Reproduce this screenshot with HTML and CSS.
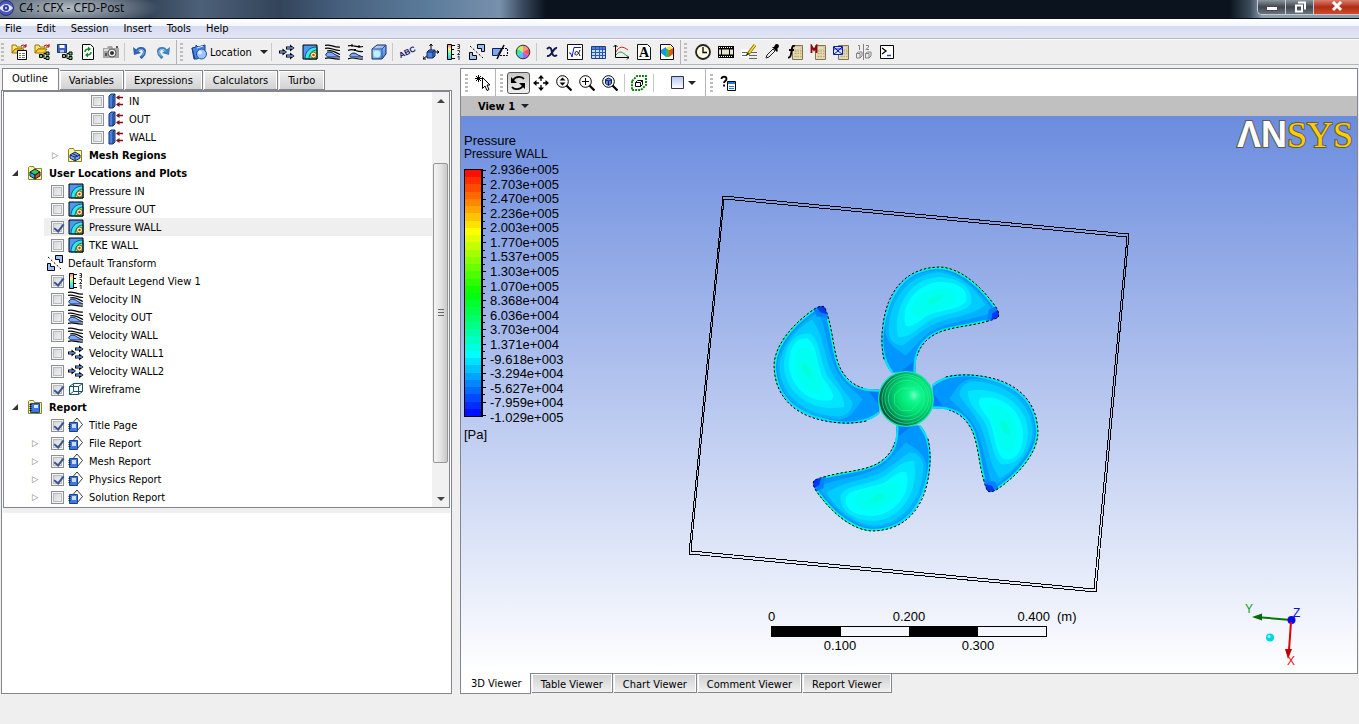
FILE: index.html
```html
<!DOCTYPE html>
<html lang="en">
<head>
    <meta charset="UTF-8">
    <meta name="viewport" content="width=device-width, initial-scale=1.0">
    <title>C4 : CFX - CFD-Post</title>
    <link rel="stylesheet" href="styles.css">
</head>
<body>
    <!-- icon set -->
    <svg class="defs" width="0" height="0" aria-hidden="true">
        <defs>
            <linearGradient id="rainbow" x1="0" y1="0" x2="0" y2="1">
                <stop offset="0" stop-color="#ff60c0"/><stop offset=".3" stop-color="#ffff80"/><stop offset=".6" stop-color="#60ffb0"/><stop offset="1" stop-color="#50b0ff"/>
            </linearGradient>
            <linearGradient id="blueFill" x1="0" y1="0" x2="1" y2="1">
                <stop offset="0" stop-color="#d8e8ff"/><stop offset="1" stop-color="#3c78e0"/>
            </linearGradient>
            <linearGradient id="pale" x1="0" y1="0" x2="0" y2="1">
                <stop offset="0" stop-color="#b4c6f4"/><stop offset="1" stop-color="#fff"/>
            </linearGradient>
        </defs>
        <symbol id="i-folder" viewBox="0 0 16 16"><path d="M1 9V1h4l1 2h5v2H4z" fill="#ffe870" stroke="#9a7400"/><path d="M1 9l3-4h9l-3 4z" fill="#ffd040" stroke="#9a7400"/><path d="M10 2q2-2 5 0M15 0v3h-3" fill="none" stroke="#b00000"/></symbol>
        <symbol id="i-net" viewBox="0 0 16 16"><path d="M6 12h4M10 9.500v5M10 9.500h2M10 14.500h2" fill="none" stroke="#000"/><path d="M5.500 10.500h3v3h-3zM12 8h3v3h-3zM12 12.500h3v3h-3z" fill="#5ad060" stroke="#000"/></symbol>
        <symbol id="i-load" viewBox="0 0 16 16"><use href="#i-folder"/><path d="M6.500 6.500h9v9h-9z" fill="#fff" stroke="#000"/><path d="M8 9.500h2m1 0h3M8 11.500h2m1 0h3M8 13.500h2m1 0h3" stroke="#777"/></symbol>
        <symbol id="i-state" viewBox="0 0 16 16"><use href="#i-folder"/><use href="#i-net"/></symbol>
        <symbol id="i-save" viewBox="0 0 16 16"><path d="M.500.500h9v8h-9z" fill="#3a62b8" stroke="#1c3570"/><path d="M2.500 1h5v3h-5z" fill="#fff"/><path d="M3 6h4v2.500H3z" fill="#b8c4e0"/><use href="#i-net"/></symbol>
        <symbol id="i-refresh" viewBox="0 0 16 16"><path d="M2.500.500h8l3 3v12h-11z" fill="#fff" stroke="#000"/><path d="M5 8c0-3 2-3 4-3M11 8c0 3-2 3-4 3" fill="none" stroke="#158a28" stroke-width="1.500"/><path d="M8 2.500L11 5 8 7.500zM8 8.500L5 11l3 2.500z" fill="#158a28"/></symbol>
        <symbol id="i-camera" viewBox="0 0 16 16"><path d="M0 4h4l1-2h4l1 2h6v10H0z" fill="#a4a4a4"/><path d="M1 5h9v2H1z" fill="#dcdcdc"/><circle cx="9" cy="9" r="4" fill="#eee" stroke="#555"/><circle cx="9" cy="9" r="2" fill="#333"/><path d="M13 2h2v2h-2zM2 9h2v3H2z" fill="#555"/></symbol>
        <symbol id="i-undo" viewBox="0 0 16 16"><path d="M5 7c2-4 8-3 7.500 1 0 3-2 4-4 6" fill="none" stroke="#2c62b4" stroke-width="3"/><path d="M1 3l1 8 7-2z" fill="#2c62b4"/><path d="M5 7.500c2-3 7-3 7 .500 0 2-1 3-2.500 4" fill="none" stroke="#8dbcf0"/></symbol>
        <symbol id="i-redo" viewBox="0 0 16 16"><path d="M11 7C9 3 3 4 3.500 8c0 3 2 4 4 6" fill="none" stroke="#3c80bc" stroke-width="3"/><path d="M15 3l-1 8-7-2z" fill="#3c80bc"/><path d="M11 7.500C9 4.500 4 4.500 4 8c0 2 1 3 2.500 4" fill="none" stroke="#a4d4f4"/></symbol>
        <symbol id="i-location" viewBox="0 0 16 16"><path d="M1 4l4-1V1l2 2 7-2v9l-8 5H3z" fill="#4c86e4" stroke="#123c88"/><path d="M1 4l3 11" stroke="#123c88"/><path d="M6 4l6-2" stroke="#d8e8ff"/><circle cx="10.500" cy="10" r="5" fill="#9cc4fa" stroke="#1c50a8"/><circle cx="9" cy="8.500" r="2" fill="#d8eaff"/></symbol>
        <symbol id="i-vector" viewBox="0 0 16 16"><path d="M7 2.500h4V.500L15.500 4 11 7.500v-2H7zM0 6.500h3.500v-2L8 8l-4.500 3.500v-2H0zM7 10.500h4v-2l4.500 3.500-4.500 3.500v-2H7z" fill="#000"/><path d="M8 4h6M1 8h5.500M8 12h6" stroke="#6c9cf0" stroke-width="1.500"/></symbol>
        <symbol id="i-contour" viewBox="0 0 16 16"><path d="M1 1h14v14H1z" fill="#4c98f4"/><path d="M15 3C7 3 3 8 3 15h12z" fill="#30e8f0" stroke="#163c5c" stroke-width=".800"/><path d="M15 6c-5 0-8 4-8 9h8z" fill="#70e8a0" stroke="#164c3c" stroke-width=".800"/><circle cx="11.500" cy="11" r="3" fill="#fffaa8" stroke="#5c4400" stroke-width=".800"/><circle cx="11.500" cy="11" r="1.200" fill="#e02020"/><path d="M1 1h14v14H1z" fill="none" stroke="#000"/></symbol>
        <symbol id="i-stream" viewBox="0 0 16 16"><path d="M0 1.500c5-2 8 2 15 1.500M0 4.500c5-2 8 2 15 2M2 7c5-2 9 2 13 3.500M0 14.500c5-2 8 1 15 .500" fill="none" stroke="#000" stroke-width="1.200"/><path d="M1 10c2-3 6-2 8 0l6 3H5c-2 0-5-1-4-3z" fill="#7caaff" stroke="#102860"/></symbol>
        <symbol id="i-particle" viewBox="0 0 16 16"><path d="M0 2c5-2 8 2 15 .500M0 6.500c6-3 8 2 15 1M0 15c6-3 9 1 15 0" fill="none" stroke="#000" stroke-width="1.200"/><path d="M3 .500h2v2H3zM10 1.500h2v2h-2zM6 5h2v2H6z"/><path d="M2 11c2-3 6-2 8 0l5 2H5c-2 0-4 0-3-2z" fill="#7caaff" stroke="#102860"/></symbol>
        <symbol id="i-volume" viewBox="0 0 16 16"><path d="M1 5l5-4h9v9l-4 5H1z" fill="url(#blueFill)" stroke="#102c60"/><path d="M1 5h10v10M11 5l4-4" fill="none" stroke="#2454a0"/><circle cx="6" cy="10" r="3.500" fill="#b8f4fa"/></symbol>
        <symbol id="i-axes" viewBox="0 0 16 16"><path d="M8 8V0M8 8h8M5 11l-5 4M6.500 2L8 0l1.500 2M14 6.500L16 8l-2 1.500M0 12v3h3" fill="none" stroke="#000"/><path d="M4 8l2-2h6v6l-2 2H4z" fill="#4c80e8" stroke="#102860"/><path d="M4 8h6v6M10 8l2-2" fill="none" stroke="#102860"/></symbol>
        <symbol id="i-legend" viewBox="0 0 16 16"><path d="M1.500.500h4v15h-4z" fill="url(#rainbow)" stroke="#000"/><path d="M6 1.500h3M6 5.500h2M6 10.500h2M6 14.500h3" stroke="#000"/><path d="M11.500 .500h2v4h-2m0-2h2M11.500 6.500h2v2l-2 2h2.500M11.500 13l1.500-1v4" fill="none" stroke="#333"/></symbol>
        <symbol id="i-transform" viewBox="0 0 16 16"><path d="M8.500.500h7v7h-3v-3h-4zM.500 8.500h3v3h4v4h-7z" fill="#9cc0fc" stroke="#000"/><path d="M1 2l13 12" stroke="#000" stroke-dasharray="2 2"/></symbol>
        <symbol id="i-clip" viewBox="0 0 16 16"><path d="M.500 4.500h9l-4 7h-5z" fill="#7ca8f8" stroke="#102050"/><path d="M10 4.500h5.500v7H7" fill="none" stroke="#000" stroke-dasharray="2 1"/><path d="M12 1L5 15" stroke="#000" stroke-width="1.500"/></symbol>
        <symbol id="i-wheel" viewBox="0 0 16 16"><path d="M8 8V1a7 7 0 0 1 6 3.500z" fill="#ff9090"/><path d="M8 8l6-3.500a7 7 0 0 1 0 7z" fill="#ff5050"/><path d="M8 8l6 3.500A7 7 0 0 1 8 15z" fill="#b060f0"/><path d="M8 8v7a7 7 0 0 1-6-3.500z" fill="#50c0ff"/><path d="M8 8l-6 3.500a7 7 0 0 1 0-7z" fill="#40e0a0"/><path d="M8 8L2 4.500A7 7 0 0 1 8 1z" fill="#c0f060"/><circle cx="8" cy="8" r="6.800" fill="none" stroke="#333"/></symbol>
        <symbol id="i-x" viewBox="0 0 16 16"><path d="M3 5c2-2 4-2 4.500 1l1 4c1 3 3 2 4.500 1M13 4c-4-1-5 9-10 8" fill="none" stroke="#10184c" stroke-width="2"/></symbol>
        <symbol id="i-expr" viewBox="0 0 16 16"><path d="M.500.500h15v15H.500z" fill="#fff" stroke="#111"/><path d="M2 9l1.500 0 1.500 4L7 3.500h7" fill="none" stroke="#1020c0"/><path d="M13 6c-2 6-5 6-5 3.500S11 6 13 12" fill="none" stroke="#000"/></symbol>
        <symbol id="i-table" viewBox="0 0 16 16"><path d="M1.500 2.500h14v12h-14z" fill="#c8dcff" stroke="#1c3c80"/><path d="M2 3h13v2H2z" fill="#4c80d8"/><path d="M5.500 3v11M9.500 3v11M12.500 3v11M2 5.500h13M2 8.500h13M2 11.500h13" stroke="#2c58b0"/></symbol>
        <symbol id="i-chart" viewBox="0 0 16 16"><path d="M2.500 1v12.500H16M.500 3l2-2 2 2M14 11.500l2 2-2 2" fill="none" stroke="#000"/><path d="M3 8c3-6 7-6 12-2" fill="none" stroke="#d02020"/><path d="M3 11c4-5 6-3 11 1" fill="none" stroke="#20a030"/></symbol>
        <symbol id="i-figure" viewBox="0 0 16 16"><path d="M1.500.500h10l3 3v12h-13z" fill="#fff" stroke="#111"/><path d="M2 6l5-3v10l-5-4z" fill="#2090f0"/><path d="M7 4l3 2v7H7z" fill="#30c040"/><path d="M10 6l4-2v6l-4 3z" fill="#f05020"/><path d="M7 4l3-2 4 2-4 2z" fill="#ffe040"/></symbol>
        <symbol id="i-clock" viewBox="0 0 16 16"><circle cx="8" cy="8" r="7" fill="#fffce0" stroke="#222" stroke-width="1.800"/><path d="M8 3v5.500h4" fill="none" stroke="#000" stroke-width="1.300"/></symbol>
        <symbol id="i-film" viewBox="0 0 16 16"><path d="M0 2h16v12H0z"/><path d="M1 3.500h14M1 12.500h14" stroke="#fff" stroke-dasharray="1 1"/><path d="M1 5.500h2v5H1zM4 5.500h7v5H4zM12 5.500h3v5h-3z" fill="#e8e4c8"/></symbol>
        <symbol id="i-edit" viewBox="0 0 16 16"><path d="M0 5.500h8v8H0z" fill="#fff"/><path d="M1 8.500h5M1 11.500h5M8 11.500h8M8 14.500h8M10 8.500h6" stroke="#666"/><path d="M14 1L7 10" stroke="#806800" stroke-width="3"/><path d="M14 1L8 9" stroke="#ffe020" stroke-width="1.500"/><path d="M5 12l1-3 2 1z"/></symbol>
        <symbol id="i-dropper" viewBox="0 0 16 16"><path d="M2 14l1-3 6-6 2 2-6 6z" fill="#e4eef4" stroke="#222"/><path d="M8 3l5 5 1-2-1-1c3-2 2-5 0-5-2 0-2 1-3 3z"/></symbol>
        <symbol id="i-calc" viewBox="0 0 16 16"><path d="M5.500 1.500h10v14h-10z" fill="#e8dcb0" stroke="#807450"/><path d="M7 3h7v2H7z" fill="#f8f4e0" stroke="#a09468" stroke-width=".500"/><path d="M7.500 7h2m1 0h1.500m1 0h1.500M7.500 9.500h2m1 0h1.500m1 0h1.500M7.500 12.500h2m1 0h1.500m1 0h1.500" stroke="#b8a878" stroke-width="1.500"/></symbol>
        <symbol id="i-fcalc" viewBox="0 0 16 16"><use href="#i-calc"/><path d="M8 2c-3-1-3 2-3.500 5S4 14 1 13.500M2 6h5" fill="none" stroke="#000" stroke-width="1.800"/></symbol>
        <symbol id="i-mcalc" viewBox="0 0 16 16"><use href="#i-calc"/><path d="M1.500 9V2L4 6l2.500-4v7" fill="none" stroke="#8c0010" stroke-width="1.800"/></symbol>
        <symbol id="i-tcalc" viewBox="0 0 16 16"><use href="#i-calc"/><path d="M.500 2.500h9v8h-9z" fill="#dce6ff" stroke="#0c18b0"/><path d="M1 3l4 4 4-4M1 10l4-3 4 3M1 5h8" fill="none" stroke="#0c18b0"/></symbol>
        <symbol id="i-compare" viewBox="0 0 16 16"><path d="M7.500 0v16M2 1.500h1.500V6M10 1.500h2.500V3L10 5.500h3M.500 9.500l2-1.500h3.500v4l-2 2H.500zM9.500 9.500l2-1.500H15v4l-2 2H9.500zM.500 9.500h3.500V14M9.500 9.500H13V14" fill="none" stroke="#808080"/></symbol>
        <symbol id="i-console" viewBox="0 0 16 16"><path d="M1.500 1.500h13v13h-13z" fill="#fff" stroke="#000"/><path d="M3 4l4 3-4 3" fill="none" stroke="#000" stroke-width="1.300"/><path d="M8 11.500h4" stroke="#1c50c0" stroke-width="1.500"/></symbol>
        <symbol id="i-pick" viewBox="0 0 16 16"><path d="M3.500 0v7M0 3.500h7M1 1l5 5M6 1L1 6" stroke="#000"/><path d="M7.500 2.500v11l2.500-2.500 2 4.500 2-1-2-4.500h3z" fill="#fff" stroke="#000"/></symbol>
        <symbol id="i-rotate" viewBox="0 0 16 16"><path d="M3 5c3-4 9-4 11-1M13 11c-3 4-9 4-11 1" fill="none" stroke="#000" stroke-width="1.800"/><path d="M1 2v6h6zM15 14V8H9z"/></symbol>
        <symbol id="i-pan" viewBox="0 0 16 16"><path d="M8 2v4M8 10v4M2 8h4M10 8h4" stroke="#000" stroke-width="1.300"/><path d="M8 0l3 3.500H5zM8 16l3-3.500H5zM0 8l3.500-3v6zM16 8l-3.500-3v6z"/></symbol>
        <symbol id="i-lens" viewBox="0 0 16 16"><circle cx="6.500" cy="6.500" r="5.800" fill="#fff" stroke="#000"/><path d="M10.500 10.500l5 5" stroke="#000" stroke-width="2.200"/></symbol>
        <symbol id="i-zoom" viewBox="0 0 16 16"><use href="#i-lens"/><path d="M6.500 2.500l3 3h-6zM6.500 10.500l3-3h-6z"/></symbol>
        <symbol id="i-zoombox" viewBox="0 0 16 16"><use href="#i-lens"/><path d="M6.500 3v7M3 6.500h7" stroke="#000"/></symbol>
        <symbol id="i-fit" viewBox="0 0 16 16"><use href="#i-lens"/><path d="M3.500 4.500l3-1.500 3 1.500v4l-3 2-3-2z" fill="#5c90f0" stroke="#101c50"/><path d="M3.500 5l3 1 3-1M6.500 6v4" fill="none" stroke="#101c50"/></symbol>
        <symbol id="i-highlight" viewBox="0 0 16 16"><path d="M1 6l5-5h9v9l-5 5H1z" fill="none" stroke="#108010" stroke-width="2" stroke-dasharray="2 1"/><path d="M4.500 7.500l2-2h5v4l-2 2h-5zM4.500 7.500h5v4M9.500 7.500l2-2" fill="none" stroke="#000"/></symbol>
        <symbol id="i-help" viewBox="0 0 16 16"><path d="M1.500 4c0-3 5-3 5 0 0 2-2.500 2-2.500 4M4 9.500v2" fill="none" stroke="#000" stroke-width="1.800"/><path d="M7.500 6.500h8v9h-8z" fill="#fff" stroke="#000"/><path d="M8 7h7v2H8z" fill="#2078e0"/><path d="M9 11.500h5M9 13.500h5" stroke="#2078e0"/></symbol>
        <symbol id="i-boundary" viewBox="0 0 16 16"><path d="M1 3l2-2h4v12l-2 2H1z" fill="#4c80e0" stroke="#10306c"/><path d="M5 3v12M5 3l2-2" stroke="#10306c"/><path d="M9 4.500h6M9 11.500h6" stroke="#801018" stroke-width="1.500"/><path d="M8 4.500L11.500 2v5zM8 11.500L11.500 9v5z" fill="#801018"/></symbol>
        <symbol id="i-fold" viewBox="0 0 16 16"><path d="M1.500 14.500v-12l1-1h4l1 2h7v11z" fill="#f8f4a0" stroke="#8c8420"/></symbol>
        <symbol id="i-mesh" viewBox="0 0 16 16"><use href="#i-fold"/><path d="M3 8l5-3 5 3v3l-5 3-5-3z" fill="#7ca4f0" stroke="#102868"/><path d="M3 8l5 2 5-2M8 10v4M5.500 6.500l5 2.500" fill="none" stroke="#102868"/></symbol>
        <symbol id="i-plots" viewBox="0 0 16 16"><use href="#i-fold"/><path d="M3 7l5 3v4l-5-3z" fill="#20a8e8" stroke="#123"/><path d="M3 7l5-3 5 3-5 3z" fill="#30c850" stroke="#123"/><path d="M8 10l5-3v4l-5 3z" fill="#e84020" stroke="#123"/></symbol>
        <symbol id="i-book" viewBox="0 0 16 16"><path d="M3.500 4.500h9v9h-9z" fill="#3c78e0" stroke="#1c4090"/><path d="M7 6h4v3H7z" fill="#dce8ff"/><path d="M2.500 5.500h2m-2 2h2m-2 2h2m-2 2h2" stroke="#000"/></symbol>
        <symbol id="i-report" viewBox="0 0 16 16"><use href="#i-fold"/><use href="#i-book"/></symbol>
        <symbol id="i-page" viewBox="0 0 16 16"><path d="M5 5.500L9 1l5.500 6.500L9 14" fill="#fff" stroke="#222" stroke-width=".900"/><path d="M1.500 5.500h8v9h-8z" fill="#3c78e0" stroke="#1c4090"/><path d="M4 7h4v4H4z" fill="#c8dcff"/><path d="M.500 7.500h2m-2 2h2m-2 2h2" stroke="#123"/></symbol>
        <symbol id="i-wire" viewBox="0 0 16 16"><path d="M1.500 5.500h9v8h-9zM5.500 2.500h9v8h-9zM1.500 5.500l4-3M10.500 5.500l4-3M1.500 13.500l4-3M10.500 13.500l4-3" fill="none" stroke="#185460"/></symbol>
    </svg>

    <div class="titlebar">
        <svg class="app-icon" viewBox="0 0 16 16"><circle cx="6" cy="8" r="7.500" fill="#4c58b8" stroke="#283078"/><path d="M-1 8q7-8 14 0-7 8-14 0z" fill="#e4e8ff"/><circle cx="6" cy="8" r="3" fill="#303c98"/><circle cx="6" cy="8" r="1" fill="#fff"/></svg>
        <span class="app-title">C4 : CFX - CFD-Post</span>
        <div class="win-buttons">
            <button class="win-btn" aria-label="Minimize"><svg viewBox="0 0 12 12"><path d="M.500 5.500h11v4H.500z" fill="#fff" stroke="#445"/></svg></button>
            <button class="win-btn" aria-label="Restore"><svg viewBox="0 0 12 12"><path d="M4 1.500h7v7" fill="none" stroke="#fff" stroke-width="2"/><path d="M2 4.500h6v6H2z" fill="none" stroke="#fff" stroke-width="2"/></svg></button>
            <button class="win-btn win-close" aria-label="Close"><svg viewBox="0 0 12 12"><path d="M2 1l8 8M10 1l-8 8" stroke="#fff" stroke-width="3"/></svg></button>
        </div>
    </div>

    <nav class="menubar">
        <button>File</button>
        <button>Edit</button>
        <button>Session</button>
        <button>Insert</button>
        <button>Tools</button>
        <button>Help</button>
    </nav>

    <div class="toolbar">
        <div class="tool-group">
            <span class="grip"></span>
            <button class="tool" aria-label="Load results"><svg><use href="#i-load"/></svg></button>
            <button class="tool" aria-label="Load state"><svg><use href="#i-state"/></svg></button>
            <button class="tool" aria-label="Save state"><svg><use href="#i-save"/></svg></button>
            <button class="tool" aria-label="Refresh"><svg><use href="#i-refresh"/></svg></button>
            <button class="tool" aria-label="Save picture"><svg><use href="#i-camera"/></svg></button>
            <span class="sep"></span>
            <button class="tool" aria-label="Undo"><svg><use href="#i-undo"/></svg></button>
            <button class="tool" aria-label="Redo"><svg><use href="#i-redo"/></svg></button>
        </div>
        <div class="tool-group">
            <span class="grip"></span>
            <button class="tool location"><svg><use href="#i-location"/></svg><span>Location</span><i class="caret"></i></button>
            <span class="sep"></span>
            <button class="tool" aria-label="Vector"><svg><use href="#i-vector"/></svg></button>
            <button class="tool" aria-label="Contour"><svg><use href="#i-contour"/></svg></button>
            <button class="tool" aria-label="Streamline"><svg><use href="#i-stream"/></svg></button>
            <button class="tool" aria-label="Particle track"><svg><use href="#i-particle"/></svg></button>
            <button class="tool" aria-label="Volume rendering"><svg><use href="#i-volume"/></svg></button>
            <span class="sep"></span>
            <button class="tool" aria-label="Text"><svg class="spill" viewBox="0 0 16 16"><text x="0" y="14" class="t-abc" transform="rotate(-26 1 13)">ABC</text></svg></button>
            <button class="tool" aria-label="Coordinate frame"><svg><use href="#i-axes"/></svg></button>
            <button class="tool" aria-label="Legend"><svg><use href="#i-legend"/></svg></button>
            <button class="tool" aria-label="Instance transform"><svg><use href="#i-transform"/></svg></button>
            <button class="tool" aria-label="Clip plane"><svg><use href="#i-clip"/></svg></button>
            <button class="tool" aria-label="Color map"><svg><use href="#i-wheel"/></svg></button>
            <span class="sep"></span>
            <button class="tool" aria-label="Variable"><svg><use href="#i-x"/></svg></button>
            <button class="tool" aria-label="Expression"><svg><use href="#i-expr"/></svg></button>
            <button class="tool" aria-label="Table"><svg><use href="#i-table"/></svg></button>
            <button class="tool" aria-label="Chart"><svg><use href="#i-chart"/></svg></button>
            <button class="tool" aria-label="Comment"><svg viewBox="0 0 16 16"><path d="M1.500.500h10l3 3v12h-13z" fill="#fff" stroke="#111"/><text x="3" y="13" class="t-a">A</text></svg></button>
            <button class="tool" aria-label="Figure"><svg><use href="#i-figure"/></svg></button>
        </div>
        <div class="tool-group last">
            <span class="grip"></span>
            <button class="tool" aria-label="Timestep selector"><svg><use href="#i-clock"/></svg></button>
            <button class="tool" aria-label="Animation"><svg><use href="#i-film"/></svg></button>
            <button class="tool" aria-label="Quick editor"><svg><use href="#i-edit"/></svg></button>
            <button class="tool" aria-label="Probe"><svg><use href="#i-dropper"/></svg></button>
            <button class="tool" aria-label="Function calculator"><svg><use href="#i-fcalc"/></svg></button>
            <button class="tool" aria-label="Macro calculator"><svg><use href="#i-mcalc"/></svg></button>
            <button class="tool" aria-label="Mesh calculator"><svg><use href="#i-tcalc"/></svg></button>
            <button class="tool" aria-label="Case comparison"><svg><use href="#i-compare"/></svg></button>
            <button class="tool" aria-label="Command editor"><svg><use href="#i-console"/></svg></button>
        </div>
    </div>

    <main class="workspace">
        <section class="dock">
            <div class="tabs">
                <button class="tab active">Outline</button>
                <button class="tab">Variables</button>
                <button class="tab">Expressions</button>
                <button class="tab">Calculators</button>
                <button class="tab">Turbo</button>
            </div>
            <div class="dock-body">
                <div class="tree">
                    <ul class="rows">
                        <li class="row lvl3"><i class="exp"></i><label><input type="checkbox"><svg><use href="#i-boundary"/></svg>IN</label></li>
                        <li class="row lvl3"><i class="exp"></i><label><input type="checkbox"><svg><use href="#i-boundary"/></svg>OUT</label></li>
                        <li class="row lvl3"><i class="exp"></i><label><input type="checkbox"><svg><use href="#i-boundary"/></svg>WALL</label></li>
                        <li class="row lvl2"><i class="exp closed"></i><b><svg><use href="#i-mesh"/></svg>Mesh Regions</b></li>
                        <li class="row"><i class="exp open"></i><b><svg><use href="#i-plots"/></svg>User Locations and Plots</b></li>
                        <li class="row lvl1"><i class="exp"></i><label><input type="checkbox"><svg><use href="#i-contour"/></svg>Pressure IN</label></li>
                        <li class="row lvl1"><i class="exp"></i><label><input type="checkbox"><svg><use href="#i-contour"/></svg>Pressure OUT</label></li>
                        <li class="row lvl1 selected"><i class="exp"></i><label><input type="checkbox" checked><svg><use href="#i-contour"/></svg>Pressure WALL</label></li>
                        <li class="row lvl1"><i class="exp"></i><label><input type="checkbox"><svg><use href="#i-contour"/></svg>TKE WALL</label></li>
                        <li class="row lvl1"><i class="exp"></i><span><svg><use href="#i-transform"/></svg>Default Transform</span></li>
                        <li class="row lvl1"><i class="exp"></i><label><input type="checkbox" checked><svg><use href="#i-legend"/></svg>Default Legend View 1</label></li>
                        <li class="row lvl1"><i class="exp"></i><label><input type="checkbox"><svg><use href="#i-stream"/></svg>Velocity IN</label></li>
                        <li class="row lvl1"><i class="exp"></i><label><input type="checkbox"><svg><use href="#i-stream"/></svg>Velocity OUT</label></li>
                        <li class="row lvl1"><i class="exp"></i><label><input type="checkbox"><svg><use href="#i-stream"/></svg>Velocity WALL</label></li>
                        <li class="row lvl1"><i class="exp"></i><label><input type="checkbox"><svg><use href="#i-vector"/></svg>Velocity WALL1</label></li>
                        <li class="row lvl1"><i class="exp"></i><label><input type="checkbox"><svg><use href="#i-vector"/></svg>Velocity WALL2</label></li>
                        <li class="row lvl1"><i class="exp"></i><label><input type="checkbox" checked><svg><use href="#i-wire"/></svg>Wireframe</label></li>
                        <li class="row"><i class="exp open"></i><b><svg><use href="#i-report"/></svg>Report</b></li>
                        <li class="row lvl1"><i class="exp"></i><label><input type="checkbox" checked><svg><use href="#i-page"/></svg>Title Page</label></li>
                        <li class="row lvl1"><i class="exp closed"></i><label><input type="checkbox" checked><svg><use href="#i-page"/></svg>File Report</label></li>
                        <li class="row lvl1"><i class="exp closed"></i><label><input type="checkbox" checked><svg><use href="#i-page"/></svg>Mesh Report</label></li>
                        <li class="row lvl1"><i class="exp closed"></i><label><input type="checkbox" checked><svg><use href="#i-page"/></svg>Physics Report</label></li>
                        <li class="row lvl1"><i class="exp closed"></i><label><input type="checkbox"><svg><use href="#i-page"/></svg>Solution Report</label></li>
                    </ul>
                    <div class="scrollbar">
                        <i class="arrow up"></i>
                        <div class="track"><div class="thumb"></div></div>
                        <i class="arrow down"></i>
                    </div>
                </div>
                <div class="splitter"></div>
                <div class="details"></div>
            </div>
        </section>

        <section class="viewer">
            <div class="viewer-body">
                <div class="view-tools">
                    <div class="tool-group">
                        <span class="grip"></span>
                        <button class="tool" aria-label="Select"><svg><use href="#i-pick"/></svg></button>
                    </div>
                    <div class="tool-group">
                        <span class="grip"></span>
                        <button class="tool pressed" aria-label="Rotate"><svg><use href="#i-rotate"/></svg></button>
                        <button class="tool" aria-label="Pan"><svg><use href="#i-pan"/></svg></button>
                        <button class="tool" aria-label="Zoom"><svg><use href="#i-zoom"/></svg></button>
                        <button class="tool" aria-label="Zoom box"><svg><use href="#i-zoombox"/></svg></button>
                        <button class="tool" aria-label="Fit view"><svg><use href="#i-fit"/></svg></button>
                        <span class="sep"></span>
                        <button class="tool" aria-label="Highlight"><svg><use href="#i-highlight"/></svg></button>
                        <span class="sep"></span>
                        <button class="tool layout" aria-label="Viewport layout"><svg viewBox="0 0 16 16"><path d="M.500 1.500h12v12h-12z" fill="url(#pale)" stroke="#334"/></svg><i class="caret"></i></button>
                    </div>
                    <div class="tool-group last">
                        <span class="grip"></span>
                        <button class="tool" aria-label="Help"><svg><use href="#i-help"/></svg></button>
                    </div>
                </div>
                <button class="view-title">View 1<i class="caret"></i></button>

                <div class="canvas">
                    <svg class="scene" viewBox="461 116 896 557" aria-label="Propeller pressure contour">
                        <defs>
                            <radialGradient id="hub" cx=".65" cy=".43" r=".68">
                                <stop offset="0" stop-color="#78ffc4"/><stop offset=".16" stop-color="#10f890"/><stop offset=".45" stop-color="#00e070"/><stop offset=".72" stop-color="#00a05c"/><stop offset="1" stop-color="#003c2c"/>
                            </radialGradient>
                            <clipPath id="bladeClip"><path d="M-43-79C-75-115-80-180-68-229C-52-310-10-394 102-396C175-392 240-320 272-272Q282-255 276-245Q265-238 240-232C190-218 130-216 90-196C40-170 28-135 28-79Z"/></clipPath>
                            <g id="blade">
                                <g clip-path="url(#bladeClip)">
                                    <path d="M-90-410H300V-60H-90z" fill="#0096ff"/>
                                    <path d="M-62-200C-55-310 0-384 100-386C170-380 235-310 262-262C210-238 120-232 72-200C40-178 22-150-2-130C-20-150-50-150-62-200Z" fill="#00b2ff"/>
                                    <path d="M-52-210C-48-300 10-378 100-380C162-372 210-330 238-282C190-244 120-246 72-218C40-200 15-176-12-160C-37-163-54-180-52-210Z" fill="#00ccff"/>
                                    <path d="M-24-186C-42-280 18-365 100-366C164-364 202-332 196-286C170-254 105-258 64-232C34-210 8-182-24-186Z" fill="#00e6ff"/>
                                    <path d="M-2-223C-17-287 38-350 105-351C162-350 188-325 180-293C160-266 100-268 60-248C40-233 8-208-2-223Z" fill="#0ff"/>
                                    <path d="M18-262C20-310 70-335 115-333C150-330 160-310 150-290C130-265 85-270 60-255C40-243 20-240 18-262Z" fill="#00fff0"/>
                                    <ellipse cx="86" cy="-298" rx="24" ry="10" transform="rotate(-28 86 -298)" fill="#00ffd8"/>
                                    <path d="M-20-79L20-110 40-79z" fill="#0078ff"/>
                                    <path d="M-43-79C-75-115-80-180-68-229C-52-310-10-394 102-396C175-392 240-320 272-272M240-232C190-218 130-216 90-196C40-170 28-135 28-79" fill="none" stroke="#00e4f0" stroke-width="12"/>
                                    <path d="M40-385Q70-396 102-396C175-392 240-320 272-272M240-232C190-218 130-216 90-196" fill="none" stroke="#10ffb4" stroke-width="7"/>
                                    <path d="M284-285L248-268 244-240 284-230z" fill="#0082ff"/>
                                    <path d="M284-272L260-258 256-240 284-235z" fill="#0038f4"/>
                                </g>
                                <path d="M-66-119C-80-180-68-250-53-289C-20-370 40-395 102-396C175-392 240-320 272-272Q282-255 276-245Q265-238 240-232C190-218 130-216 90-196C60-180 40-155 34-130" fill="none" stroke="#000" stroke-width="3" stroke-dasharray="7 6"/>
                            </g>
                        </defs>
                        <g class="wire">
                            <path d="M723 196L1129 234 1096 592 689 554z"/>
                            <path d="M724 199L1127 237 1094 589 691 551z"/>
                        </g>
                        <g transform="translate(906 399) scale(.3333)">
                            <use href="#blade"/>
                            <use href="#blade" transform="rotate(90)"/>
                            <use href="#blade" transform="rotate(180)"/>
                            <use href="#blade" transform="rotate(270)"/>
                            <circle r="82" fill="url(#hub)" stroke="#10e8b0" stroke-width="4"/>
                            <g fill="none" stroke="#30f0a0" stroke-width="2">
                                <circle cx="1" r="73"/>
                                <circle cx="2" cy="-2" r="65"/>
                                <circle cx="1" cy="-2" r="54"/>
                                <path d="M-12-32L22-32 34-14V14L16 34H-14L-34 16V-14z"/>
                            </g>
                        </g>
                        <!-- orientation triad -->
                        <path d="M1291 620L1262 617.500" stroke="#087808" stroke-width="2"/>
                        <path d="M1252 617l10-3.500v7z" fill="#086808"/>
                        <circle cx="1291.500" cy="620" r="4" fill="#0808e8"/>
                        <path d="M1291 622l-2 28" stroke="#e00000" stroke-width="2"/>
                        <path d="M1285 649h7l-4 10z" fill="#c00000"/>
                        <circle cx="1270" cy="637.500" r="4" fill="#00d8e0"/><circle cx="1269" cy="636.500" r="1.500" fill="#8ff"/>
                        <text x="1245" y="613" fill="#10a010">Y</text>
                        <text x="1293" y="617" fill="#1010e0">Z</text>
                        <text x="1287" y="665" fill="#e01010">X</text>
                    </svg>

                    <div class="legend">
                        <div class="legend-title">Pressure</div>
                        <div class="legend-sub">Pressure WALL</div>
                        <div class="legend-scale">
                            <div class="bands" id="bands"></div>
                            <ol class="values">
                                <li>2.936e+005</li><li>2.703e+005</li><li>2.470e+005</li><li>2.236e+005</li><li>2.003e+005</li><li>1.770e+005</li>
                                <li>1.537e+005</li><li>1.303e+005</li><li>1.070e+005</li><li>8.368e+004</li><li>6.036e+004</li><li>3.703e+004</li>
                                <li>1.371e+004</li><li>-9.618e+003</li><li>-3.294e+004</li><li>-5.627e+004</li><li>-7.959e+004</li><li>-1.029e+005</li>
                            </ol>
                        </div>
                        <div class="legend-unit">[Pa]</div>
                    </div>

                    <div class="logo"><span class="logo-an">ΛN</span><span class="logo-sys">SYS</span></div>

                    <div class="ruler">
                        <div class="ruler-top"><span>0</span><span>0.200</span><span>0.400</span></div>
                        <div class="ruler-bar"><i></i><i></i><i></i><i></i></div>
                        <div class="ruler-bottom"><span>0.100</span><span>0.300</span></div>
                        <span class="ruler-unit">(m)</span>
                    </div>
                </div>
            </div>
            <div class="tabs bottom">
                <button class="tab active">3D Viewer</button>
                <button class="tab">Table Viewer</button>
                <button class="tab">Chart Viewer</button>
                <button class="tab">Comment Viewer</button>
                <button class="tab">Report Viewer</button>
            </div>
        </section>
    </main>

    <script>
        // colour map bands, red at the top to blue at the bottom
        const bands = document.getElementById('bands');
        const count = 34;
        const ramp = [[0, 0, 255], [0, 255, 255], [0, 255, 0], [255, 255, 0], [255, 0, 0]];
        for (let i = 0; i < count; i++) {
            const v = (1 - (i + 0.5) / count) * 4;
            const k = Math.floor(v);
            const rgb = ramp[k].map((c, n) => Math.round(c + (ramp[k + 1][n] - c) * (v - k)));
            const band = document.createElement('div');
            band.style.backgroundColor = `rgb(${rgb.join(',')})`;
            bands.appendChild(band);
        }
    </script>
</body>
</html>
```
FILE: styles.css
```css
* {
    box-sizing: border-box;
}
body {
    margin: 0;
    height: 100vh;
    display: flex;
    flex-direction: column;
    overflow: hidden;
    background-color: #efefef;
    color: #000;
    font-family: "DejaVu Sans Condensed", "Open Sans", sans-serif;
    font-size: 11px;
}
button {
    font: inherit;
    color: inherit;
    border: none;
    background: none;
    padding: 0;
    margin: 0;
}
svg {
    width: 16px;
    height: 16px;
    flex: none;
}
.defs {
    position: absolute;
    width: 0;
    height: 0;
}
.spill {
    overflow: visible;
}
.t-abc {
    font: bold 8px "Liberation Sans", sans-serif;
    fill: #10106c;
}
.t-a {
    font: bold 14px "Liberation Serif", serif;
}

/* title bar */
.titlebar {
    flex: none;
    height: 19px;
    display: flex;
    align-items: flex-start;
    border-bottom: 1px solid #0a0e14;
    background:
        radial-gradient(ellipse 90px 18px at 70px 8px, rgba(190, 198, 204, 0.9), rgba(150, 160, 170, 0.5) 60%, transparent),
        linear-gradient(to right, #5c6a7c 0, #36465a 150px, #4c6078 200px, #33445a 280px, #47607e 340px, #5c7c9c 430px, #7890ac 500px, #3c4c60 522px, #0b141e 545px, #0b141e 1230px, #3c4c5c 1250px, #8c9cac 1262px);
}
.app-title {
    flex: 1;
    padding-left: 3px;
    font: 12px/16px "Open Sans", sans-serif;
}
.win-buttons {
    display: flex;
    height: 15px;
    border: 1px solid #c4ccd4;
    border-top: none;
    border-right: none;
    border-radius: 0 0 0 5px;
    overflow: hidden;
}
.win-btn {
    width: 28px;
    border-right: 1px solid #c4ccd4;
    background: linear-gradient(#8c949c, #40464e 50%, #6c747c);
}
.win-btn svg {
    width: 12px;
    height: 12px;
    display: block;
    margin: 0 auto;
}
.win-close {
    width: 45px;
    border: none;
    background: linear-gradient(#d88070, #b02c14 50%, #d04c30);
}

/* menu */
.menubar {
    flex: none;
    height: 20px;
    display: flex;
    padding-left: 5px;
    gap: 15px;
    border-bottom: 1px solid #b4b4c8;
    background: linear-gradient(#fff, #f4f6fb 7px, #d5dbee 7px, #e2e6f6);
}

/* toolbars */
.toolbar {
    flex: none;
    height: 26px;
    display: flex;
    border-top: 1px solid #fff;
    border-bottom: 1px solid #b4b4bc;
}
.tool-group {
    display: flex;
    align-items: center;
    padding-right: 2px;
    border-right: 1px solid #b4b4bc;
}
.tool-group.last {
    border-right: none;
}
.grip {
    width: 3px;
    height: 18px;
    margin: 0 4px 0 3px;
    background: repeating-linear-gradient(#bcbcbc 0 2px, transparent 2px 4px);
}
.tool-group:first-child .grip {
    margin-left: 1px;
    margin-right: 3px;
}
.tool {
    display: flex;
    align-items: center;
    width: 23px;
    height: 22px;
    padding-left: 4px;
}
.sep {
    width: 1px;
    height: 18px;
    margin: 0 3px 0 2px;
    background-color: #c8c8c8;
}
.caret {
    border: 4px solid transparent;
    border-top-color: #222;
    border-bottom: none;
}
.location {
    width: 82px;
    gap: 3px;
}
.location .caret {
    margin-left: auto;
    margin-right: 1px;
}

/* workspace */
.workspace {
    flex: 1;
    min-height: 0;
    display: grid;
    grid-template-columns: 452px 1fr;
    gap: 8px;
    padding: 3px 1px 30px 0;
}
.dock,
.viewer {
    display: flex;
    flex-direction: column;
    min-height: 0;
}
.tabs {
    flex: none;
    display: flex;
    align-items: flex-end;
    gap: 1px;
    height: 22px;
    padding-left: 2px;
}
.tab {
    height: 20px;
    padding: 0 9px;
    border: 1px solid #84868f;
    border-left: none;
    box-shadow: inset 1px 1px #fff, inset -1px 0 #fff;
    background: linear-gradient(#f0f0f0, #d2d2d2);
}
.tab.active {
    height: 22px;
    padding: 0 10px 2px 9px;
    border: 1px solid #84868f;
    border-bottom: none;
    background: #fff;
}
.dock-body {
    flex: 1;
    min-height: 0;
    display: flex;
    flex-direction: column;
    margin-left: 1px;
    padding: 0 1px;
    border: 1px solid #84868f;
    background-color: #fff;
}
.tree {
    flex: none;
    display: flex;
    border: 1px solid #84868f;
    background-color: #fff;
}
.splitter {
    height: 5px;
    background-color: #efefef;
}
.rows {
    flex: 1;
    margin: 0;
    padding: 0 0 1px;
    list-style: none;
}
.row {
    display: flex;
    height: 18px;
}
.row label,
.row b,
.row span {
    flex: 1;
    display: flex;
    align-items: center;
    gap: 5px;
    padding-left: 3px;
    white-space: nowrap;
}
.row b {
    gap: 6px;
}
.row input {
    appearance: none;
    width: 13px;
    height: 13px;
    margin: 0 -1px 0 4px;
    border: 1px solid #8e8f8f;
    box-shadow: inset 0 0 0 1px #f4f4f4, inset 0 0 0 2px #b8bcc0;
    background: linear-gradient(135deg, #cfd2d6, #f6f6f6);
}
.row input:checked::after {
    content: "";
    display: block;
    width: 4px;
    height: 8px;
    margin: 0 0 0 4px;
    border: solid #3c5494;
    border-width: 0 2px 2px 0;
    transform: rotate(38deg);
}
.selected label {
    background-color: #efefef;
}
.lvl1 {
    padding-left: 20px;
}
.lvl2 {
    padding-left: 40px;
}
.lvl3 {
    padding-left: 60px;
}
.exp {
    flex: none;
    width: 20px;
    padding-left: 2px;
    display: grid;
    place-items: center;
}
.exp.open::before {
    content: "";
    border: 3px solid transparent;
    border-right-color: #333;
    border-bottom-color: #333;
}
.exp.closed::before {
    content: "▷";
    font-size: 9px;
    font-style: normal;
    color: #777;
}
.scrollbar {
    width: 17px;
    display: flex;
    flex-direction: column;
    background-color: #f1f1f1;
}
.arrow {
    height: 17px;
    display: grid;
    place-items: center;
}
.arrow::before {
    content: "";
    border: 4px solid transparent;
}
.arrow.up::before {
    border-bottom-color: #444;
    border-top: none;
}
.arrow.down::before {
    border-top-color: #444;
    border-bottom: none;
}
.track {
    flex: 1;
    padding: 54px 1px 27px;
    display: flex;
}
.thumb {
    flex: 1;
    display: grid;
    place-items: center;
    border: 1px solid #979797;
    border-radius: 2px;
    background: linear-gradient(to right, #f4f4f4, #e4e4e4 50%, #c8c8c8);
}
.thumb::before {
    content: "";
    width: 6px;
    height: 8px;
    background: repeating-linear-gradient(#666 0 1px, transparent 1px 3px);
}
.details {
    flex: 1;
}

/* viewer */
.viewer-body {
    flex: 1;
    min-height: 0;
    display: flex;
    flex-direction: column;
    border: 1px solid #84868f;
    background-color: #fff;
}
.view-tools {
    flex: none;
    height: 27px;
    display: flex;
}
.view-tools .grip,
.view-tools .tool-group:first-child .grip {
    margin: 0 4px;
}
.view-tools .tool-group {
    padding-right: 0;
}
.view-tools .tool {
    padding-left: 3px;
}
.view-tools .pressed {
    border: 1px solid #555;
    border-radius: 3px;
    padding-left: 2px;
    background: linear-gradient(#c8c8c8, #f0f0f0);
}
.view-tools .layout {
    width: 36px;
    margin-left: 12px;
    padding-left: 2px;
    gap: 1px;
}
.view-title {
    flex: none;
    height: 20px;
    display: flex;
    align-items: center;
    gap: 6px;
    padding-left: 17px;
    background-color: #c0c0c0;
    font-weight: bold;
}
.canvas {
    flex: 1;
    min-height: 0;
    position: relative;
    background: linear-gradient(#6b8cde, #fff);
    font-family: "Liberation Sans", Arial, sans-serif;
    font-size: 13px;
}
.scene {
    display: block;
    width: 100%;
    height: 100%;
}
.scene text {
    font-size: 12px;
}
.wire {
    fill: none;
    stroke: #000;
    shape-rendering: crispEdges;
}
.legend {
    position: absolute;
    left: 3px;
    top: 18px;
    line-height: 14px;
}
.legend-sub {
    font-size: 12px;
    line-height: 12px;
}
.legend-scale {
    display: flex;
    gap: 7px;
    height: 262px;
    margin-top: 3px;
}
.bands {
    width: 19px;
    height: 248px;
    margin-top: 6px;
    display: flex;
    flex-direction: column;
    border: 1px solid #000;
    border-right-width: 2px;
}
.bands div {
    flex: 1;
    position: relative;
}
.bands div::after {
    content: "";
    position: absolute;
    top: 0;
    right: -4px;
    width: 2px;
    height: 1px;
    background-color: #000;
}
.bands div:nth-child(odd)::after {
    right: -5px;
    width: 3px;
}
.bands div:last-child::after {
    top: auto;
    bottom: 0;
    right: -5px;
    width: 3px;
}
.values {
    margin: 0;
    padding: 0;
    list-style: none;
    display: flex;
    flex-direction: column;
    justify-content: space-between;
}
.legend-unit {
    margin-top: 3px;
}
.logo {
    position: absolute;
    top: 1px;
    right: 4px;
    display: flex;
    align-items: baseline;
    font-size: 36px;
    line-height: 36px;
    -webkit-text-stroke: 2px #5c5c48;
    paint-order: stroke;
}
.logo-an {
    font-weight: bold;
    color: #fff;
}
.logo-sys {
    font-family: "Liberation Serif", serif;
    color: #ffcc00;
}
.ruler {
    position: absolute;
    bottom: 18px;
    left: 50%;
    width: 276px;
    margin-left: -138px;
}
.ruler-top {
    display: grid;
    grid-template-columns: 1fr auto 1fr;
    margin: 0 -3px;
    line-height: 18px;
}
.ruler-top span:last-child {
    text-align: right;
}
.ruler-bar {
    display: flex;
    height: 11px;
    border: 1px solid #000;
}
.ruler-bar i {
    flex: 1;
}
.ruler-bar i:nth-child(odd) {
    background-color: #000;
}
.ruler-bottom {
    display: grid;
    grid-template-columns: 1fr 1fr;
    text-align: center;
    line-height: 18px;
}
.ruler-unit {
    position: absolute;
    top: 0;
    left: 100%;
    margin-left: 10px;
    line-height: 18px;
}
.tabs.bottom {
    align-items: flex-start;
    height: 20px;
    padding-left: 0;
}
.tabs.bottom .tab {
    height: 19px;
    padding: 3px 9px 0;
    border-top: none;
    background: linear-gradient(#cfcfcf, #f0f0f0);
}
.tabs.bottom .tab.active {
    height: 21px;
    margin-top: -1px;
    padding: 0 8px 0 10px;
    border: 1px solid #84868f;
    border-top: none;
    background: #fff;
    position: relative;
}
```
